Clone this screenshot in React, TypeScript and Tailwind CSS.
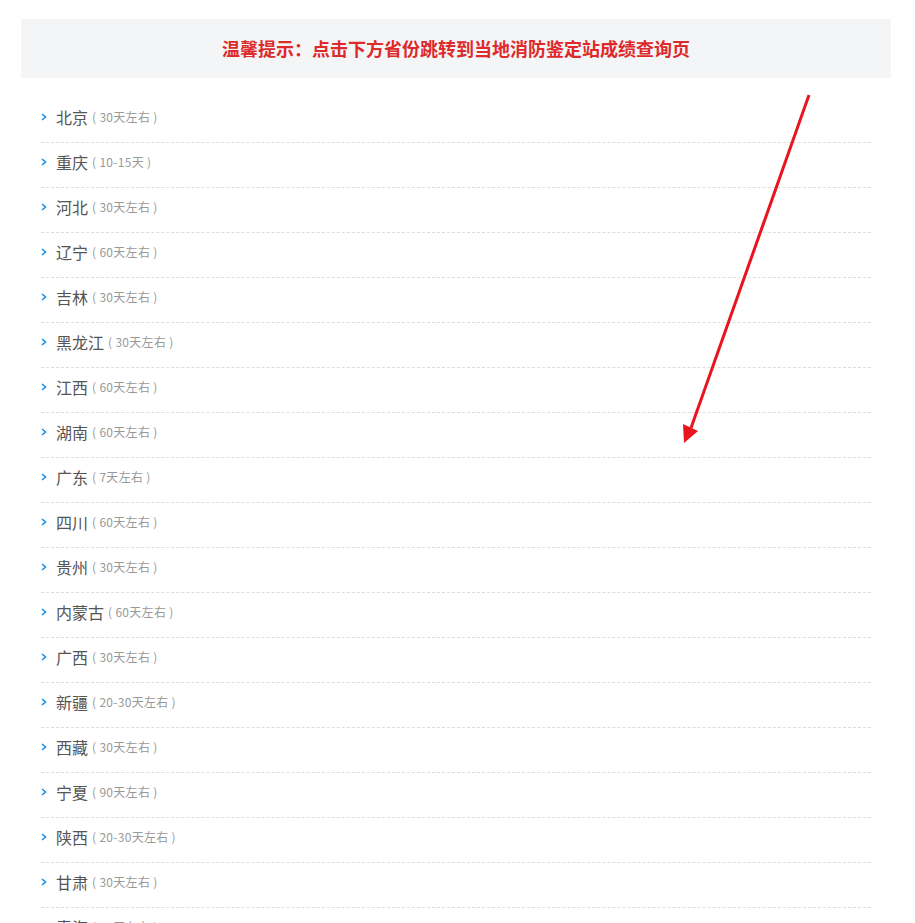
const provinces: [string, string][] = [
  ['北京', '30天左右'],
  ['重庆', '10-15天'],
  ['河北', '30天左右'],
  ['辽宁', '60天左右'],
  ['吉林', '30天左右'],
  ['黑龙江', '30天左右'],
  ['江西', '60天左右'],
  ['湖南', '60天左右'],
  ['广东', '7天左右'],
  ['四川', '60天左右'],
  ['贵州', '30天左右'],
  ['内蒙古', '60天左右'],
  ['广西', '30天左右'],
  ['新疆', '20-30天左右'],
  ['西藏', '30天左右'],
  ['宁夏', '90天左右'],
  ['陕西', '20-30天左右'],
  ['甘肃', '30天左右'],
  ['青海', '30天左右'],
];

const Chevron = () => (
  <svg width="6" height="8" viewBox="0 0 6 8" className="mr-[9px] shrink-0">
    <polyline points="1,1 4.5,4 1,7" fill="none" stroke="#1b8fe3" strokeWidth="1.6" />
  </svg>
);

export default function App() {
  return (
    <div
      className="relative min-h-screen bg-white pt-[19px] pl-[21px] pr-[24px]"
      style={{ fontFamily: '"Microsoft YaHei", "Noto Sans CJK SC", "Noto Sans", sans-serif' }}
    >
      <div className="h-[59px] bg-[#f4f5f7] flex items-center justify-center">
        <h1 className="text-[18px] font-bold text-[#dd2a2a]">
          温馨提示：点击下方省份跳转到当地消防鉴定站成绩查询页
        </h1>
      </div>

      <ul className="pt-5 px-5">
        {provinces.map(([name, note]) => (
          <li
            key={name}
            className="h-[45px] flex items-center pb-[6px] border-b border-dashed border-[#dddddd] cursor-pointer"
          >
            <Chevron />
            <span className="text-[16px] text-[#555555]">{name}</span>
            <span className="text-[12px] text-[#999999] ml-[4px] tracking-[0.3px]">( {note} )</span>
          </li>
        ))}
      </ul>

      {/* pointer arrow drawn over the list */}
      <svg
        className="absolute left-0 top-0 pointer-events-none"
        width="915"
        height="460"
        viewBox="0 0 915 460"
      >
        <line x1="809" y1="95" x2="691" y2="428" stroke="#e8141e" strokeWidth="3" />
        <polygon points="683,424 698,431 684,443" fill="#e8141e" />
      </svg>
    </div>
  );
}
